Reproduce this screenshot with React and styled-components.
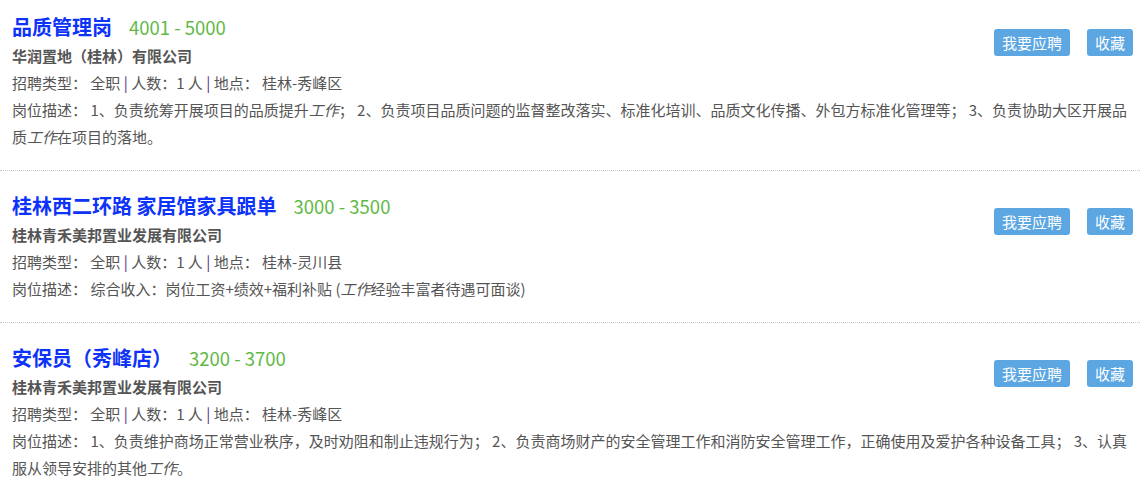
import React from 'react';
import styled, { createGlobalStyle } from 'styled-components';

const GlobalStyle = createGlobalStyle`
  body {
    margin: 0;
    background: #fff;
    font-family: "Noto Sans CJK SC", "Noto Sans", sans-serif;
    color: #555;
  }
`;

const jobs = [
  {
    title: '品质管理岗',
    salary: '4001 - 5000',
    company: '华润置地（桂林）有限公司',
    place: '桂林-秀峰区',
    desc: [
      '1、负责统筹开展项目的品质提升',
      { em: '工作' },
      '； 2、负责项目品质问题的监督整改落实、标准化培训、品质文化传播、外包方标准化管理等； 3、负责协助大区开展品质',
      { em: '工作' },
      '在项目的落地。',
    ],
  },
  {
    title: '桂林西二环路 家居馆家具跟单',
    salary: '3000 - 3500',
    company: '桂林青禾美邦置业发展有限公司',
    place: '桂林-灵川县',
    desc: ['综合收入：岗位工资+绩效+福利补贴 (', { em: '工作' }, '经验丰富者待遇可面谈)'],
  },
  {
    title: '安保员（秀峰店）',
    salary: '3200 - 3700',
    company: '桂林青禾美邦置业发展有限公司',
    place: '桂林-秀峰区',
    desc: [
      '1、负责维护商场正常营业秩序，及时劝阻和制止违规行为； 2、负责商场财产的安全管理工作和消防安全管理工作，正确使用及爱护各种设备工具； 3、认真服从领导安排的其他',
      { em: '工作' },
      '。',
    ],
  },
];

const List = styled.ul`
  list-style: none;
  margin: 0;
  padding: 0;
`;

const Item = styled.li`
  padding: ${(p) => (p.$first ? '12px' : '20px')} 7px 20px 12px;
  border-bottom: 1px dotted #c8c8c8;
  font-size: 15px;
  line-height: 27px;

  &:last-child {
    border-bottom: none;
  }
`;

const Actions = styled.div`
  float: right;
  display: flex;
  gap: 17px;
  margin-top: 17px;
`;

const Button = styled.button`
  height: 27px;
  padding: 0 8px;
  border: none;
  border-radius: 3px;
  background: #5ca6e2;
  color: #fff;
  font-family: inherit;
  font-size: 15px;
  line-height: 27px;
  cursor: pointer;
`;

const TitleRow = styled.div`
  display: flex;
  align-items: baseline;
  gap: 17px;
  line-height: 30px;
`;

const Title = styled.a`
  color: #0d33f8;
  font-size: 20px;
  font-weight: bold;
  text-decoration: none;
`;

const Salary = styled.span`
  color: #5fb946;
  font-size: 18.5px;
`;

const Company = styled.div`
  font-weight: bold;
  color: #555;
`;

const Line = styled.div`
  color: #555;
`;

const Sep = styled.span`
  color: #5b2a80;
`;

const Em = styled.em`
  font-style: italic;
`;

const Job = ({ job, first }) => (
  <Item $first={first}>
    <Actions>
      <Button>我要应聘</Button>
      <Button>收藏</Button>
    </Actions>
    <TitleRow>
      <Title href="#">{job.title}</Title>
      <Salary>{job.salary}</Salary>
    </TitleRow>
    <Company>{job.company}</Company>
    <Line>
      招聘类型： 全职 <Sep>|</Sep> 人数：1 人 <Sep>|</Sep> 地点： {job.place}
    </Line>
    <Line>
      岗位描述： {job.desc.map((part, i) => (typeof part === 'string' ? part : <Em key={i}>{part.em}</Em>))}
    </Line>
  </Item>
);

export default function App() {
  return (
    <>
      <GlobalStyle />
      <List>
        {jobs.map((job, i) => (
          <Job key={i} job={job} first={i === 0} />
        ))}
      </List>
    </>
  );
}
